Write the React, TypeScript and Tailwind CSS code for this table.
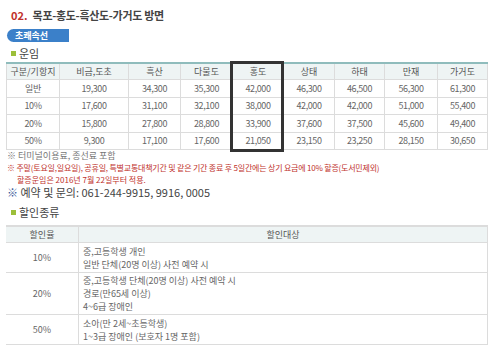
const fares = [
  { label: '일반', vals: ['19,300', '34,300', '35,300', '42,000', '46,300', '46,500', '56,300', '61,300'] },
  { label: '10%', vals: ['17,600', '31,100', '32,100', '38,000', '42,000', '42,000', '51,000', '55,400'] },
  { label: '20%', vals: ['15,800', '27,800', '28,800', '33,900', '37,600', '37,500', '45,600', '49,400'] },
  { label: '50%', vals: ['9,300', '17,100', '17,600', '21,050', '23,150', '23,250', '28,150', '30,650'] },
];

const heads = ['구분/기항지', '비금,도초', '흑산', '다물도', '홍도', '상태', '하태', '만재', '가거도'];
const widths = ['w-[53px]', 'w-[69px]', 'w-[52px]', 'w-[52px]', 'w-[51px]', 'w-[51px]', 'w-[50px]', 'w-[53px]', 'w-[51px]'];

const discounts = [
  { rate: '10%', h: 'h-[30px]', lines: ['중,고등학생 개인', '일반 단체(20명 이상) 사전 예약 시'] },
  { rate: '20%', h: 'h-[42px]', lines: ['중,고등학생 단체(20명 이상) 사전 예약 시', '경로(만65세 이상)', '4~6급 장애인'] },
  { rate: '50%', h: 'h-[30px]', lines: ['소아(만 2세~초등학생)', '1~3급 장애인 (보호자 1명 포함)'] },
];

function SubTitle({ text }: { text: string }) {
  return (
    <div className="flex items-center gap-[3px] pl-[11px] h-[11px] text-[11px] leading-none text-[#444]">
      <span className="w-[5px] h-[5px] bg-[#9cbf3a]" />
      <span>{text}</span>
    </div>
  );
}

export default function App() {
  return (
    <div
      className="w-[500px] h-[355px] bg-white overflow-hidden relative"
      style={{ fontFamily: '"Noto Sans CJK KR", "Liberation Sans", sans-serif' }}
    >
      {/* Title */}
      <div className="flex items-baseline gap-[5px] pl-[11px] pt-[7px] h-[23px] leading-[16px]">
        <span className="text-[11px] text-[#c0312c] font-bold">02.</span>
        <span className="text-[11px] tracking-[-0.3px] text-[#444] font-bold">목포-홍도-흑산도-가거도 방면</span>
      </div>

      {/* Tab */}
      <div className="ml-[7px] mt-[6px] w-[62px] h-[13px] bg-[#3b80c9] rounded-l-full rounded-tr-[12px] flex items-center pl-[8px] text-[9px] font-bold text-white leading-none">
        초쾌속선
      </div>

      <div className="mt-[6px]">
        <SubTitle text="운임" />
      </div>

      {/* Fare table */}
      <div className="relative ml-[6px] mt-[3px] w-[482px] border-t-2 border-[#8fbcbc]">
        <div className="flex h-[16px] bg-[#eef4f4] border-b border-[#dcdcdc]">
          {heads.map((h, i) => (
            <div
              key={h}
              className={`${widths[i]} flex items-center justify-center text-[9px] text-[#555] border-l border-[#dcdcdc] ${i === heads.length - 1 ? 'border-r' : ''}`}
            >
              {h}
            </div>
          ))}
        </div>
        {fares.map((r) => (
          <div key={r.label} className="flex h-[17.5px] border-b border-[#dcdcdc]">
            {[r.label, ...r.vals].map((v, i) => (
              <div
                key={i}
                className={`${widths[i]} flex items-center justify-center text-[9px] tracking-[-0.4px] text-[#666] border-l border-[#dcdcdc] ${i === heads.length - 1 ? 'border-r' : ''}`}
              >
                {v}
              </div>
            ))}
          </div>
        ))}
        {/* highlight box */}
        <div className="absolute left-[224px] top-[-3px] w-[54px] h-[91px] border-[3px] border-[#333] pointer-events-none" />
      </div>

      {/* Notes */}
      <div className="pl-[7px] text-[9px] leading-[12px]">
        <div className="text-[#777]">※ 터미널이용료, 종선료 포함</div>
        <div className="text-[8px] tracking-[-0.2px] text-[#c0312c]">※ 주말(토요일,일요일), 공휴일, 특별교통대책기간 및 같은 기간 종료 후 5일간에는 상기 요금에 10% 할증(도서민제외)</div>
        <div className="text-[8px] text-[#c0312c] pl-[10px]">할증운임은 2016년 7월 22일부터 적용.</div>
        <div className="text-[11px] leading-[13px] text-[#444]">
          <span className="text-[#3b5a9a]">※</span> 예약 및 문의: 061-244-9915, 9916, 0005
        </div>
      </div>

      <div className="mt-[8px]">
        <SubTitle text="할인종류" />
      </div>

      {/* Discount table */}
      <div className="ml-[6px] mt-[7px] w-[482px] border-t-2 border-[#8fbcbc] border-r border-[#dcdcdc]">
        <div className="flex h-[16px] bg-[#eef4f4] border-b border-[#dcdcdc] text-[9px] text-[#555]">
          <div className="w-[72px] flex items-center justify-center">할인율</div>
          <div className="flex-1 flex items-center justify-center border-l border-[#dcdcdc]">할인대상</div>
        </div>
        {discounts.map((d) => (
          <div key={d.rate} className={`flex ${d.h} border-b border-[#dcdcdc] text-[9px] text-[#666]`}>
            <div className="w-[72px] flex items-center justify-center">{d.rate}</div>
            <div className="flex-1 flex flex-col justify-center pl-[4px] border-l border-[#dcdcdc] leading-[13px]">
              {d.lines.map((l) => (
                <div key={l}>{l}</div>
              ))}
            </div>
          </div>
        ))}
      </div>
    </div>
  );
}
